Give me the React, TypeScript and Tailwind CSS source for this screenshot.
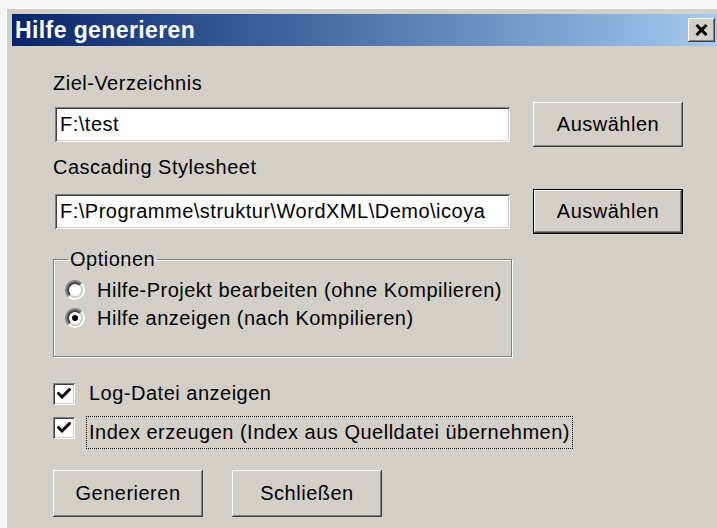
import React from 'react';

const FONT = "font-['Liberation_Sans',Arial,sans-serif]";

// classic 3D edges
const raised =
  'bg-[#d4d0c8] shadow-[inset_-1px_-1px_0_#404040,inset_1px_1px_0_#ffffff,inset_-2px_-2px_0_#808080,inset_2px_2px_0_#d4d0c8]';
const raisedDefault =
  'bg-[#d4d0c8] border border-black shadow-[inset_-1px_-1px_0_#404040,inset_1px_1px_0_#ffffff,inset_-2px_-2px_0_#808080,inset_2px_2px_0_#d4d0c8]';
const sunken =
  'bg-white shadow-[inset_1px_1px_0_#808080,inset_-1px_-1px_0_#ffffff,inset_2px_2px_0_#404040,inset_-2px_-2px_0_#d4d0c8]';

const TEXT = 'text-[20px] leading-[23px] tracking-[0.5px]';

const PushButton: React.FC<{ label: string; isDefault?: boolean; tall?: boolean }> = ({ label, isDefault, tall }) => (
  <button
    className={`${isDefault ? raisedDefault : raised} ${tall ? 'h-[47px]' : 'h-[45px]'} w-[150px] flex items-center justify-center ${TEXT} text-black`}
  >
    {label}
  </button>
);

const TextField: React.FC<{ value: string }> = ({ value }) => (
  <div className={`${sunken} h-[35px] w-[455px] ml-[2px] flex items-center pl-[5px] pr-[3px] overflow-hidden`}>
    <span className={`whitespace-nowrap ${TEXT} text-black`}>{value}</span>
  </div>
);

const Radio: React.FC<{ checked?: boolean; label: string }> = ({ checked, label }) => (
  <div className="h-[28px] flex items-center">
    <div className="w-[20px] h-[20px] rounded-full border-2 border-t-[#808080] border-l-[#808080] border-b-white border-r-white">
      <div className="w-full h-full rounded-full border-2 border-t-[#404040] border-l-[#404040] border-b-[#d4d0c8] border-r-[#d4d0c8] bg-white flex items-center justify-center">
        {checked && <div className="w-[6px] h-[6px] rounded-full bg-black" />}
      </div>
    </div>
    <span className={`ml-[12px] ${TEXT} whitespace-nowrap`}>{label}</span>
  </div>
);

const CheckBox: React.FC = () => (
  <div className={`${sunken} w-[22px] h-[22px] shrink-0 flex items-center justify-center`}>
    <svg width="14" height="12" viewBox="0 0 14 12">
      <path d="M1.5 5.5 L5 9 L12.5 1.5" stroke="#000" strokeWidth="3" fill="none" strokeLinecap="square" />
    </svg>
  </div>
);

export default function App() {
  return (
    <div className={`w-[717px] h-[528px] overflow-hidden bg-[#f6f6f6] pt-[8px] pl-[6px] ${FONT}`}>
      <div className="h-full bg-[#d4d0c8] border-t border-l border-white pt-[5px] pl-[5px]">
        {/* caption */}
        <div className="h-[32px] flex items-center bg-gradient-to-r from-[#0a246a] to-[#a6caf0]">
          <span className="pl-[3px] text-white font-bold text-[23px] leading-[26px] tracking-[0.4px]">Hilfe generieren</span>
          <div className={`${raised} ml-auto mr-[2px] w-[27px] h-[24px] flex items-center justify-center`}>
            <svg width="13" height="12" viewBox="0 0 13 12">
              <path d="M1.5 1 L11.5 11 M11.5 1 L1.5 11" stroke="#000" strokeWidth="3" />
            </svg>
          </div>
        </div>

        <div className="pl-[41px] text-black">
          <div className={`mt-[26px] ${TEXT}`}>Ziel-Verzeichnis</div>
          <div className="mt-[7px] flex items-center h-[45px]">
            <TextField value="F:\test" />
            <div className="ml-[23px]">
              <PushButton label="Auswählen" />
            </div>
          </div>

          <div className={`mt-[9px] ${TEXT}`}>Cascading Stylesheet</div>
          <div className="mt-[9px] flex items-center h-[46px]">
            <TextField value="F:\Programme\struktur\WordXML\Demo\icoya" />
            <div className="ml-[23px]">
              <PushButton label="Auswählen" isDefault />
            </div>
          </div>

          <fieldset className="mt-[14px] w-[459px] border border-[#808080] shadow-[1px_1px_0_#ffffff,inset_1px_1px_0_#ffffff] pl-[11px] pt-[5px] pb-[24px]">
            <legend className={`ml-[3px] px-[2px] ${TEXT}`}>Optionen</legend>
            <Radio label="Hilfe-Projekt bearbeiten (ohne Kompilieren)" />
            <Radio label="Hilfe anzeigen (nach Kompilieren)" checked />
          </fieldset>

          <div className="mt-[25px] flex items-center">
            <CheckBox />
            <span className={`ml-[14px] ${TEXT}`}>Log-Datei anzeigen</span>
          </div>
          <div className="mt-[11px] flex items-start">
            <div className="mt-[1px]">
              <CheckBox />
            </div>
            <span className={`ml-[11px] border border-dotted border-black pt-[4px] pb-[4px] pl-[2px] pr-[2px] ${TEXT} whitespace-nowrap`}>
              Index erzeugen (Index aus Quelldatei übernehmen)
            </span>
          </div>

          <div className="mt-[21px] flex gap-[29px]">
            <PushButton label="Generieren" tall />
            <PushButton label="Schließen" tall />
          </div>
        </div>
      </div>
    </div>
  );
}
